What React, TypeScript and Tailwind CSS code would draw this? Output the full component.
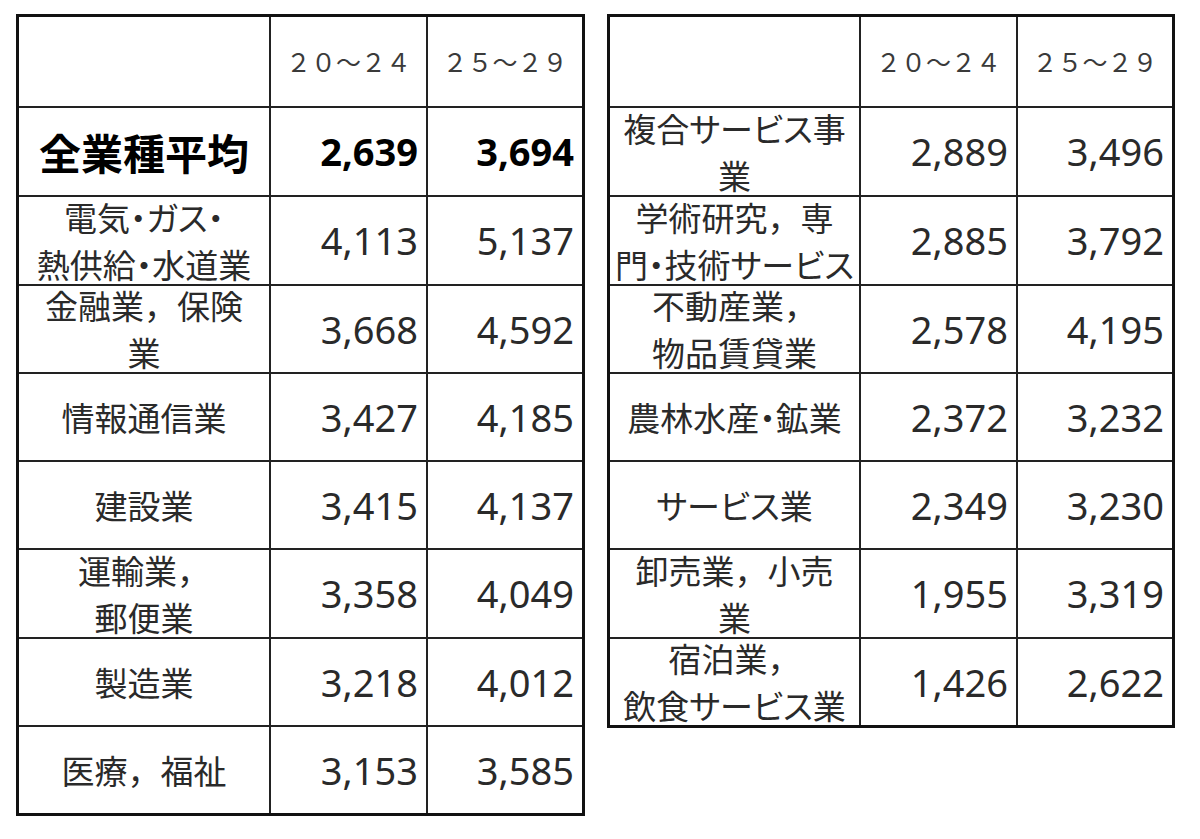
import React from "react";

type Row = { label: string[]; a: string; b: string; bold?: boolean };

const leftRows: Row[] = [
  { label: ["全業種平均"], a: "2,639", b: "3,694", bold: true },
  { label: ["電気・ガス・", "熱供給・水道業"], a: "4,113", b: "5,137" },
  { label: ["金融業，保険", "業"], a: "3,668", b: "4,592" },
  { label: ["情報通信業"], a: "3,427", b: "4,185" },
  { label: ["建設業"], a: "3,415", b: "4,137" },
  { label: ["運輸業，", "郵便業"], a: "3,358", b: "4,049" },
  { label: ["製造業"], a: "3,218", b: "4,012" },
  { label: ["医療，福祉"], a: "3,153", b: "3,585" },
];

const rightRows: Row[] = [
  { label: ["複合サービス事", "業"], a: "2,889", b: "3,496" },
  { label: ["学術研究，専", "門・技術サービス"], a: "2,885", b: "3,792" },
  { label: ["不動産業，", "物品賃貸業"], a: "2,578", b: "4,195" },
  { label: ["農林水産・鉱業"], a: "2,372", b: "3,232" },
  { label: ["サービス業"], a: "2,349", b: "3,230" },
  { label: ["卸売業，小売", "業"], a: "1,955", b: "3,319" },
  { label: ["宿泊業，", "飲食サービス業"], a: "1,426", b: "2,622" },
];

const rowHeights = [
  "h-[89px]",
  "h-[89px]",
  "h-[88px]",
  "h-[88px]",
  "h-[88px]",
  "h-[89px]",
  "h-[88px]",
  "h-[88px]",
];

const cjk = "font-['Noto_Sans_CJK_JP',sans-serif]";
const num = "font-['Noto_Sans',sans-serif]";

function Line({ text }: { text: string }) {
  const parts = text.split("，");
  return (
    <span className="block">
      {parts.map((p, i) => (
        <React.Fragment key={i}>
          {p}
          {i < parts.length - 1 && (
            <span className="[font-feature-settings:normal]">，</span>
          )}
        </React.Fragment>
      ))}
    </span>
  );
}

function Table({ rows, colW }: { rows: Row[]; colW: string }) {
  return (
    <div className="border-[3px] border-[#111] bg-white self-start">
      <div className={`grid ${colW}`}>
        <div className="h-[91px] border-r-2 border-b-2 border-[#222]" />
        <div
          className={`h-[91px] border-r-2 border-b-2 border-[#222] flex items-center justify-center text-[25px] text-[#3a3a3a] ${cjk}`}
        >
          ２０～２４
        </div>
        <div
          className={`h-[91px] border-b-2 border-[#222] flex items-center justify-center text-[25px] text-[#3a3a3a] ${cjk}`}
        >
          ２５～２９
        </div>
        {rows.map((r, i) => {
          const last = i === rows.length - 1;
          const h = last ? "h-[86px]" : rowHeights[i];
          const bb = last ? "" : "border-b-2";
          return (
            <React.Fragment key={i}>
              <div
                className={`${h} ${bb} border-r-2 border-[#222] flex items-center justify-center overflow-hidden`}
              >
                <div
                  className={`${cjk} text-center whitespace-nowrap [font-feature-settings:'palt'] ${
                    r.bold
                      ? "text-[42px] font-bold text-black leading-[48px]"
                      : "text-[33px] text-[#2a2a2a] leading-[47px]"
                  }`}
                >
                  {r.label.map((l, k) => (
                    <Line key={k} text={l} />
                  ))}
                </div>
              </div>
              <div
                className={`${h} ${bb} border-r-2 border-[#222] flex items-center justify-end pr-[8px] ${num} ${
                  r.bold
                    ? "text-[38px] font-bold text-black"
                    : "text-[38px] text-[#2a2a2a]"
                }`}
              >
                {r.a}
              </div>
              <div
                className={`${h} ${bb} border-[#222] flex items-center justify-end pr-[8px] ${num} ${
                  r.bold
                    ? "text-[38px] font-bold text-black"
                    : "text-[38px] text-[#2a2a2a]"
                }`}
              >
                {r.b}
              </div>
            </React.Fragment>
          );
        })}
      </div>
    </div>
  );
}

export default function App() {
  return (
    <div className="w-[1200px] h-[839px] bg-white flex items-start pt-[14px] pl-[16px] gap-[22px]">
      <Table rows={leftRows} colW="grid-cols-[252px_157px_154px]" />
      <Table rows={rightRows} colW="grid-cols-[251px_157px_154px]" />
    </div>
  );
}
